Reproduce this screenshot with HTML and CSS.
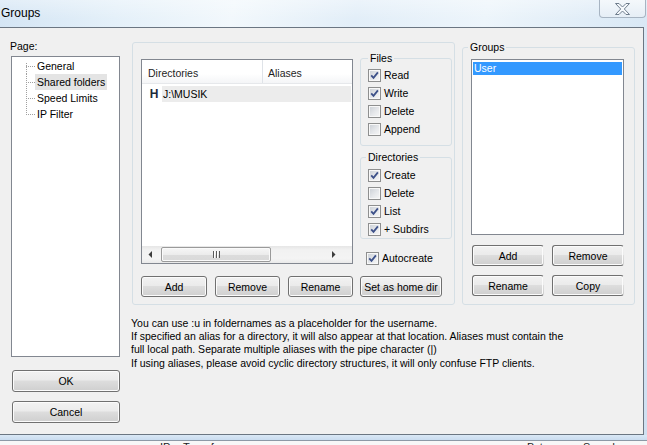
FILE: index.html
```html
<!DOCTYPE html>
<html lang="en">
<head>
<meta charset="utf-8">
<title>Groups</title>
<link rel="stylesheet" href="styles.css">
</head>
<body>
<div class="window">
  <div class="titlebar">
    <span class="title">Groups</span>
    <span class="close">
      <svg width="15" height="12" viewBox="0 0 15 12"><polygon points="0.5,0.5 4,0.5 7.5,4 11,0.5 14.5,0.5 9.3,6 14.5,11.5 11,11.5 7.5,8 4,11.5 0.5,11.5 5.7,6" fill="#f6f9fc" stroke="#6f7d8c" stroke-width="1"/></svg>
    </span>
  </div>

  <div class="client">
    <div class="leftcol">
      <div class="page-label">Page:</div>
      <ul class="tree">
        <li><span class="conn"></span><span class="item">General</span></li>
        <li><span class="conn"></span><span class="item sel">Shared folders</span></li>
        <li><span class="conn"></span><span class="item">Speed Limits</span></li>
        <li><span class="conn"></span><span class="item">IP Filter</span></li>
      </ul>
      <button class="btn dlg ok">OK</button>
      <button class="btn dlg cancel">Cancel</button>
    </div>

    <div class="main">
      <div class="toprow">
        <div class="panel">
          <div class="panel-top">
            <div class="listview">
              <div class="lv-header">
                <span class="col col1">Directories</span>
                <span class="col col2">Aliases</span>
              </div>
              <div class="lv-body">
                <div class="lv-row"><span class="lv-icon">H</span><span class="lv-text">J:\MUSIK</span></div>
              </div>
              <div class="hscroll">
                <span class="sb-arrow"><svg width="5" height="7" viewBox="0 0 5 7"><polygon points="4,0 0.5,3.5 4,7" fill="#3c3c3c"/></svg></span>
                <span class="sb-thumb"><span class="grip"></span></span>
                <span class="sb-track"></span>
                <span class="sb-arrow right"><svg width="5" height="7" viewBox="0 0 5 7"><polygon points="1,0 4.5,3.5 1,7" fill="#3c3c3c"/></svg></span>
              </div>
            </div>

            <div class="perms">
              <fieldset class="gb files">
                <legend>Files</legend>
                <label class="chk"><span class="box"><svg width="11" height="11" viewBox="0 0 11 11"><path d="M2.2 5.3 L4.5 7.8 L8.9 2.4" fill="none" stroke="#3d5189" stroke-width="1.8"/></svg></span>Read</label>
                <label class="chk"><span class="box"><svg width="11" height="11" viewBox="0 0 11 11"><path d="M2.2 5.3 L4.5 7.8 L8.9 2.4" fill="none" stroke="#3d5189" stroke-width="1.8"/></svg></span>Write</label>
                <label class="chk"><span class="box"></span>Delete</label>
                <label class="chk"><span class="box"></span>Append</label>
              </fieldset>
              <fieldset class="gb dirs">
                <legend>Directories</legend>
                <label class="chk"><span class="box"><svg width="11" height="11" viewBox="0 0 11 11"><path d="M2.2 5.3 L4.5 7.8 L8.9 2.4" fill="none" stroke="#3d5189" stroke-width="1.8"/></svg></span>Create</label>
                <label class="chk"><span class="box"></span>Delete</label>
                <label class="chk"><span class="box"><svg width="11" height="11" viewBox="0 0 11 11"><path d="M2.2 5.3 L4.5 7.8 L8.9 2.4" fill="none" stroke="#3d5189" stroke-width="1.8"/></svg></span>List</label>
                <label class="chk"><span class="box"><svg width="11" height="11" viewBox="0 0 11 11"><path d="M2.2 5.3 L4.5 7.8 L8.9 2.4" fill="none" stroke="#3d5189" stroke-width="1.8"/></svg></span>+ Subdirs</label>
              </fieldset>
              <label class="chk autocreate"><span class="box"><svg width="11" height="11" viewBox="0 0 11 11"><path d="M2.2 5.3 L4.5 7.8 L8.9 2.4" fill="none" stroke="#3d5189" stroke-width="1.8"/></svg></span>Autocreate</label>
            </div>
          </div>

          <div class="btnrow">
            <button class="btn b-add">Add</button>
            <button class="btn b-rem">Remove</button>
            <button class="btn b-ren">Rename</button>
            <button class="btn b-home">Set as home dir</button>
          </div>
        </div>

        <fieldset class="gb groups">
          <legend>Groups</legend>
          <div class="listbox">
            <div class="lb-item sel">User</div>
          </div>
          <div class="gbtns">
            <button class="btn gbtn">Add</button>
            <button class="btn gbtn">Remove</button>
            <button class="btn gbtn">Rename</button>
            <button class="btn gbtn">Copy</button>
          </div>
        </fieldset>
      </div>

      <div class="help">
        <p>You can use :u in foldernames as a placeholder for the username.</p>
        <p>If specified an alias for a directory, it will also appear at that location. Aliases must contain the<br>full local path. Separate multiple aliases with the pipe character (|)</p>
        <p class="last">If using aliases, please avoid cyclic directory structures, it will only confuse FTP clients.</p>
      </div>
    </div>
  </div>

  <div class="bottomframe">
    <span class="bf-ip">IP</span>
    <span class="bf-tr">Transfer</span>
    <span class="bf-by">Bytes</span>
    <span class="bf-sp">Speed</span>
  </div>
</div>
</body>
</html>
```

FILE: styles.css
```css
html, body {
  margin: 0;
  padding: 0;
}

body {
  width: 647px;
  height: 445px;
  overflow: hidden;
  font-family: "Liberation Sans", Arial, sans-serif;
  font-size: 10.5px;
  color: #000;
  background: #dae8f5;
}

.window {
  width: 647px;
  height: 445px;
  display: flex;
  flex-direction: column;
  background: linear-gradient(180deg, #dce9f6, #cfe0f1);
}

/* ---------- title bar ---------- */
.titlebar {
  flex: none;
  height: 27px;
  display: flex;
  justify-content: space-between;
  align-items: flex-start;
  background:
    linear-gradient(180deg, rgba(255,255,255,0.35), rgba(255,255,255,0) 70%),
    linear-gradient(100deg, #d4e5f4 0%, #e4f0f9 18%, #f2f8fc 36%, #e2eef8 55%, #edf5fb 75%, #d9e8f5 100%);
}

.title {
  font-size: 12px;
  line-height: 27px;
  padding-left: 1px;
  color: #000;
}

.close {
  width: 45px;
  height: 17px;
  margin-right: 1px;
  border: 1px solid #a7b4c2;
  border-top: none;
  border-radius: 0 0 4px 4px;
  background: linear-gradient(180deg, #f4f8fb, #e6eef6);
  display: flex;
  align-items: center;
  justify-content: center;
}

/* ---------- client area ---------- */
.client {
  flex: none;
  align-self: flex-start;
  width: 643px;
  height: 406px;
  border: 1px solid #6b7682;
  border-left: none;
  background: #f0f0f0;
  display: flex;
}

.leftcol {
  flex: none;
  width: 109px;
  margin-left: 11px;
  padding-top: 12px;
  display: flex;
  flex-direction: column;
}

.page-label {
  line-height: 13px;
  margin-left: -1px;
}

.tree {
  list-style: none;
  margin: 3px 0 0;
  padding: 1px 0 0;
  height: 301px;
  box-sizing: border-box;
  border: 1px solid #828790;
  background: #fff;
}

.tree li {
  display: flex;
  height: 16px;
}

.conn {
  flex: none;
  width: 9px;
  margin-left: 14px;
  background-image:
    repeating-linear-gradient(to bottom, #a0a0a0 0 1px, transparent 1px 2px),
    repeating-linear-gradient(to right, #a0a0a0 0 1px, transparent 1px 2px);
  background-repeat: no-repeat;
  background-size: 1px 100%, 9px 1px;
  background-position: 0 0, 0 8px;
}

.tree li:first-child .conn {
  background-size: 1px 11px, 9px 1px;
  background-position: 0 100%, 0 8px;
}

.tree li:last-child .conn {
  background-size: 1px 9px, 9px 1px;
  background-position: 0 0, 0 8px;
}

.item {
  padding: 0 2px;
  line-height: 16px;
  height: 16px;
  white-space: nowrap;
}

.item.sel {
  background: #e4e4e4;
}

/* ---------- buttons ---------- */
.btn {
  font-family: inherit;
  font-size: 10.5px;
  color: #000;
  height: 21px;
  padding: 0;
  box-sizing: border-box;
  border: 1px solid #707070;
  border-radius: 3px;
  background: linear-gradient(180deg, #f2f2f2 0%, #ebebeb 45%, #dddddd 50%, #cfcfcf 100%);
  box-shadow: inset 0 0 0 1px #fbfbfb;
  white-space: nowrap;
}

.dlg {
  width: 108px;
  height: 22px;
  margin-left: 1px;
}

.ok { margin-top: 13px; }
.cancel { margin-top: 9px; }

/* ---------- main area ---------- */
.main {
  flex: none;
  margin-left: 12px;
  padding-top: 14px;
  display: flex;
  flex-direction: column;
}

.toprow {
  display: flex;
  align-items: flex-start;
}

.panel {
  flex: none;
  width: 323px;
  height: 263px;
  box-sizing: border-box;
  border: 1px solid #d5dfe5;
  border-radius: 3px;
  padding: 9px 0 0 8px;
  display: flex;
  flex-direction: column;
}

.panel-top {
  display: flex;
  align-items: flex-start;
}

.listview {
  flex: none;
  width: 212px;
  height: 205px;
  margin-top: 7px;
  box-sizing: border-box;
  border: 1px solid #828790;
  background: #fff;
  display: flex;
  flex-direction: column;
}

.lv-header {
  flex: none;
  height: 24px;
  box-sizing: border-box;
  display: flex;
  background: linear-gradient(180deg, #ffffff 0%, #ffffff 60%, #f4f5f7 100%);
  border-bottom: 1px solid #e6e8eb;
}

.col {
  display: flex;
  align-items: center;
  padding-top: 2px;
  color: #1e1e1e;
}

.col1 {
  width: 114px;
  padding-left: 6px;
  border-right: 1px solid #dfe3e8;
}

.col2 {
  padding-left: 5px;
}

.lv-body {
  flex: 1;
}

.lv-row {
  margin-top: 2px;
  height: 16px;
  display: flex;
}

.lv-icon {
  flex: none;
  width: 16px;
  margin-left: 4px;
  font-weight: bold;
  font-size: 12px;
  line-height: 16px;
  color: #1b2a3b;
  text-align: center;
}

.lv-text {
  flex: 1;
  margin-right: 1px;
  padding-left: 1px;
  line-height: 16px;
  background: #ececec;
}

.hscroll {
  flex: none;
  height: 17px;
  display: flex;
  align-items: center;
  background: linear-gradient(180deg, #e6e6e6 0%, #f2f2f2 25%, #f4f4f4 75%, #e9e9e9 100%);
}

.sb-arrow {
  flex: none;
  width: 17px;
  height: 17px;
  display: flex;
  align-items: center;
  justify-content: center;
}

.sb-arrow.right {
  margin-right: 10px;
}

.sb-thumb {
  flex: none;
  width: 110px;
  height: 15px;
  margin-left: 2px;
  box-sizing: border-box;
  border: 1px solid #9a9a9a;
  border-radius: 2px;
  background: linear-gradient(180deg, #f6f6f6 0%, #ececec 50%, #dcdcdc 51%, #d9d9d9 100%);
  box-shadow: inset 0 0 0 1px #fafafa;
  display: flex;
  align-items: center;
  justify-content: center;
}

.grip {
  width: 7px;
  height: 7px;
  background: repeating-linear-gradient(to right, #5a5a5a 0 1px, #ffffff 1px 2px, transparent 2px 3px);
}

.sb-track {
  flex: 1;
}

.perms {
  flex: none;
  width: 92px;
  margin-left: 7px;
  display: flex;
  flex-direction: column;
}

fieldset.gb {
  margin: 0;
  padding: 0;
  min-width: 0;
  border: 1px solid #d5dfe5;
  border-radius: 3px;
}

fieldset.gb legend {
  padding: 0 2px;
  line-height: 13px;
}

fieldset.files {
  padding: 1px 0 7px 7px;
}
fieldset.files legend { margin-left: 0; }

fieldset.dirs {
  margin-top: 5px;
  padding: 2px 0 0 7px;
}
fieldset.dirs legend { margin-left: -2px; }

.chk {
  display: flex;
  align-items: center;
  height: 18px;
  gap: 3px;
  white-space: nowrap;
}

.box {
  flex: none;
  width: 13px;
  height: 13px;
  box-sizing: border-box;
  border: 1px solid #8e8f8f;
  background: linear-gradient(135deg, #c9ced4 0%, #e6e8eb 55%, #f7f7f7 100%);
  box-shadow: inset 0 0 0 1px #f8f8f8;
  display: flex;
  align-items: center;
  justify-content: center;
}

.box svg { display: block; }

.autocreate {
  margin-top: 10px;
  padding-left: 6px;
}

.btnrow {
  display: flex;
  gap: 8px;
  margin-top: 9px;
}

.b-add { width: 66px; }
.b-rem { width: 65px; }
.b-ren { width: 65px; }
.b-home { width: 82px; margin-left: -1px; }

/* ---------- groups ---------- */
fieldset.groups {
  flex: none;
  width: 173px;
  height: 264px;
  box-sizing: border-box;
  margin-left: 7px;
  margin-top: -1px;
}

fieldset.groups legend { margin-left: 5px; }

.listbox {
  width: 153px;
  height: 176px;
  margin: 5px 0 0 8px;
  box-sizing: border-box;
  border: 1px solid #828790;
  background: #fff;
  padding: 2px 1px 0;
}

.lb-item {
  height: 13px;
  line-height: 13px;
  padding-left: 1px;
}

.lb-item.sel {
  background: #3399ff;
  color: #fff;
}

.gbtns {
  display: grid;
  grid-template-columns: 72px 72px;
  column-gap: 8px;
  row-gap: 9px;
  margin: 10px 0 0 9px;
}

.gbtn {
  width: 72px;
  border-right-color: transparent;
  background:
    linear-gradient(#3a3a3a, #3a3a3a) no-repeat right 0 center / 1px 9px,
    linear-gradient(180deg, #f2f2f2 0%, #ebebeb 45%, #dddddd 50%, #cfcfcf 100%);
}

/* ---------- help text ---------- */
.help {
  margin: 12px 0 0 -1px;
}

.help p {
  margin: 0;
  line-height: 13px;
  white-space: nowrap;
}

.help p.last {
  margin-top: 1px;
}

/* ---------- bottom frame ---------- */
.bottomframe {
  flex: none;
  height: 10px;
  overflow: hidden;
  display: flex;
  align-items: flex-start;
  padding-left: 160px;
  box-sizing: border-box;
  font-size: 11px;
  line-height: 12px;
  color: #222;
  background: linear-gradient(180deg, #dae8f6 0px, #c9dcef 5px, #8d99a6 5px, #8d99a6 6px, #f7f7f7 6px);
}

.bottomframe span {
  padding-top: 6px;
}

.bf-ip { width: 23px; }
.bf-tr { width: 344px; }
.bf-by { width: 56px; }
```
